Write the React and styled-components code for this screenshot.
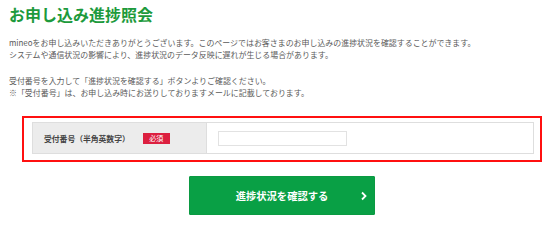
import React from 'react';
import styled, { createGlobalStyle } from 'styled-components';

const GlobalStyle = createGlobalStyle`
  html, body {
    margin: 0;
    padding: 0;
    background: #fff;
  }
  body {
    font-family: "Noto Sans CJK JP", "Noto Sans", sans-serif;
  }
`;

const Page = styled.div`
  width: 550px;
  padding: 6px 0 0 9px;
  box-sizing: border-box;
`;

const Title = styled.h1`
  margin: 0;
  font-size: 16px;
  line-height: 16px;
  font-weight: 700;
  color: #1d9a3c;
  letter-spacing: 0;
`;

const Lead = styled.p`
  margin: ${p => p.$top}px 0 0;
  font-size: 7.95px;
  line-height: 12px;
  color: #5a5a5a;
  white-space: nowrap;
`;

const Highlight = styled.div`
  margin: 17px 0 0 13px;
  width: 520px;
  box-sizing: border-box;
  border: 2px solid #ff1010;
  padding: 4px 6px 6px 8px;
`;

const FormTable = styled.div`
  display: grid;
  grid-template-columns: 174px 1fr;
  height: 30px;
  border: 1px solid #dedede;
`;

const LabelCell = styled.div`
  display: flex;
  align-items: center;
  gap: 13px;
  padding-left: 11px;
  background: #ececec;
  border-right: 1px solid #dedede;
`;

const Label = styled.span`
  font-size: 7.8px;
  font-weight: 700;
  color: #444;
  white-space: nowrap;
`;

const Badge = styled.span`
  display: inline-flex;
  align-items: center;
  justify-content: center;
  width: 27px;
  height: 11px;
  background: #dc1f3f;
  color: #fff;
  font-size: 7px;
  line-height: 1;
`;

const ValueCell = styled.div`
  display: flex;
  align-items: center;
  padding-left: 11px;
  background: #fff;
`;

const TextInput = styled.input`
  width: 129px;
  height: 15px;
  box-sizing: border-box;
  border: 1px solid #e2e2e2;
  background: #fff;
  padding: 0 4px;
  font-size: 8px;
  outline: none;
`;

const Actions = styled.div`
  display: flex;
  justify-content: center;
  width: 520px;
  margin: 14px 0 0 13px;
`;

const SubmitButton = styled.button`
  position: relative;
  display: flex;
  align-items: center;
  justify-content: center;
  width: 186px;
  height: 39px;
  padding: 0;
  border: 1px solid #0b9a42;
  border-radius: 1px;
  background: #09a045;
  color: #fff;
  font-family: "Noto Sans CJK JP", "Noto Sans", sans-serif;
  font-size: 10.3px;
  font-weight: 700;
  cursor: pointer;
`;

const Chevron = styled.svg`
  position: absolute;
  right: 6px;
  top: 50%;
  transform: translateY(-50%);
`;

export default function App() {
  return (
    <>
      <GlobalStyle />
      <Page>
        <Title>お申し込み進捗照会</Title>
        <Lead $top={15}>
          mineoをお申し込みいただきありがとうございます。このページではお客さまのお申し込みの進捗状況を確認することができます。
          <br />
          システムや通信状況の影響により、進捗状況のデータ反映に遅れが生じる場合があります。
        </Lead>
        <Lead $top={14}>
          受付番号を入力して「進捗状況を確認する」ボタンよりご確認ください。
          <br />
          ※「受付番号」は、お申し込み時にお送りしておりますメールに記載しております。
        </Lead>
        <Highlight>
          <FormTable>
            <LabelCell>
              <Label>受付番号（半角英数字）</Label>
              <Badge>必須</Badge>
            </LabelCell>
            <ValueCell>
              <TextInput type="text" />
            </ValueCell>
          </FormTable>
        </Highlight>
        <Actions>
          <SubmitButton type="button">
            進捗状況を確認する
            <Chevron width="8" height="10" viewBox="0 0 8 10">
              <path d="M2 1.5 L5.5 5 L2 8.5" fill="none" stroke="#fff" strokeWidth="1.8" />
            </Chevron>
          </SubmitButton>
        </Actions>
      </Page>
    </>
  );
}
